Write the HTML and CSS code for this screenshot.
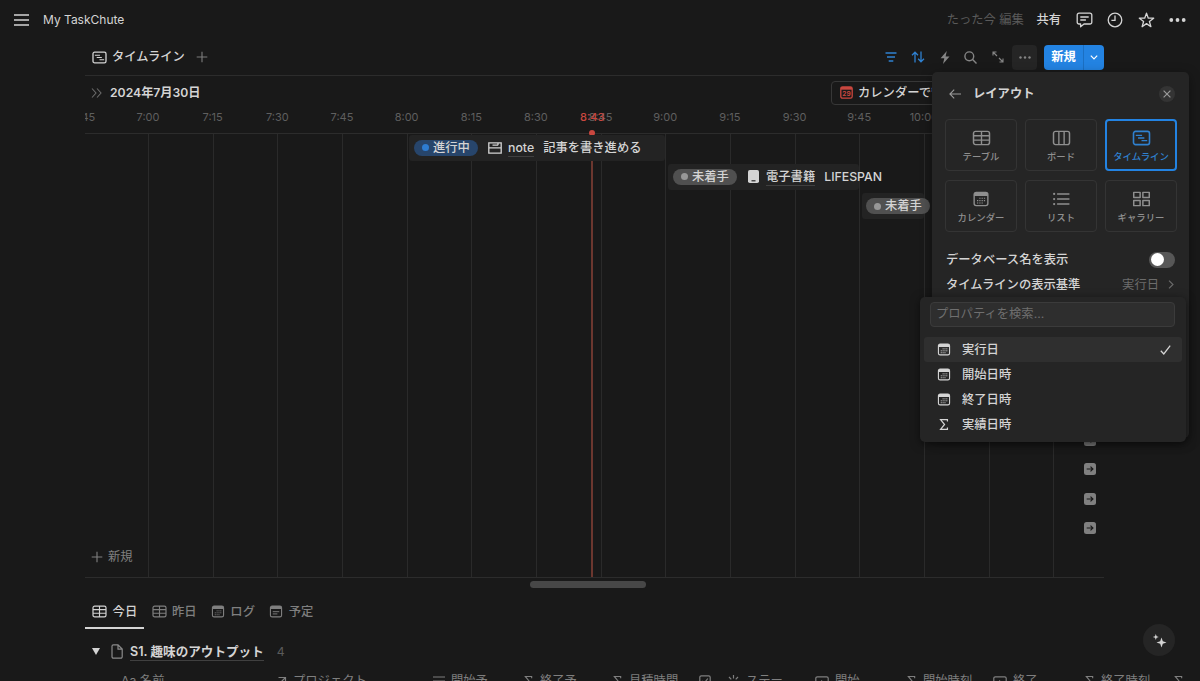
FILE: index.html
```html
<!DOCTYPE html>
<html lang="ja">
<head>
  <meta charset="UTF-8">
  <title>My TaskChute</title>
  <link rel="stylesheet" href="styles.css">
</head>
<body>

<!-- icons -->
<svg class="sprite" xmlns="http://www.w3.org/2000/svg">
  <symbol id="i-timeline" viewBox="0 0 16 14"><rect x="1" y="1.2" width="14" height="11.6" rx="1.8" fill="none" stroke="currentColor" stroke-width="1.4"/><path d="M3 4.600h5.500M5 7h5.500M8 9.400h5" fill="none" stroke="currentColor" stroke-width="1.1"/></symbol>
  <symbol id="i-table" viewBox="0 0 16 14"><rect x="1" y="1.2" width="14" height="11.6" rx="1.8" fill="none" stroke="currentColor" stroke-width="1.3"/><path d="M1 5h14M1 8.9h14M8 1.2v11.6" stroke="currentColor" stroke-width="1.2"/></symbol>
  <symbol id="i-board" viewBox="0 0 16 14"><rect x="1" y="1.2" width="14" height="11.6" rx="1.8" fill="none" stroke="currentColor" stroke-width="1.3"/><path d="M5.7 1.2v11.6M10.3 1.2v11.6" stroke="currentColor" stroke-width="1.2"/></symbol>
  <symbol id="i-cal" viewBox="0 0 14 14"><rect x="1" y="1.2" width="12" height="11.6" rx="1.8" fill="none" stroke="currentColor" stroke-width="1.2"/><path d="M1 4.4V3a1.9 1.9 0 0 1 1.9-1.9h8.200A1.900 1.900 0 0 1 13 3v1.400z" fill="currentColor"/><path d="M5.500 6.300h5.500M3.500 8.400h7.500M3.500 10.500h5.200" stroke="currentColor" stroke-width="1" stroke-dasharray="1.100 .9" fill="none"/></symbol>
  <symbol id="i-cal-list" viewBox="0 0 14 14"><rect x="1" y="1.2" width="12" height="11.6" rx="1.8" fill="none" stroke="currentColor" stroke-width="1.2"/><path d="M1 4.400V3a1.900 1.900 0 0 1 1.900-1.900h8.200A1.900 1.900 0 0 1 13 3v1.400z" fill="currentColor"/><path d="M3.500 7.200h7M3.500 9.600h5" stroke="currentColor" stroke-width="1"/></symbol>
  <symbol id="i-list" viewBox="0 0 16 14"><path d="M5 2.500h10M5 7h10M5 11.500h10" stroke="currentColor" stroke-width="1.400" stroke-linecap="round"/><circle cx="1.900" cy="2.500" r="1" fill="currentColor"/><circle cx="1.900" cy="7" r="1" fill="currentColor"/><circle cx="1.900" cy="11.500" r="1" fill="currentColor"/></symbol>
  <symbol id="i-gallery" viewBox="0 0 16 14"><path d="M1.200 1.200h5.600v4.400H1.200zM9.200 1.200h5.600v4.400H9.200zM1.200 8.400h5.600v4.400H1.200zM9.200 8.400h5.600v4.400H9.200z" fill="none" stroke="currentColor" stroke-width="1.300" stroke-linejoin="round"/></symbol>
  <symbol id="i-plus" viewBox="0 0 12 12"><path d="M6 .7v10.600M.7 6h10.600" stroke="currentColor" stroke-width="1.100"/></symbol>
  <symbol id="i-sigma" viewBox="0 0 12 14"><path d="M9.700 3.700V1.700H2.300L6.600 7 2.300 12.300h7.400v-2" fill="none" stroke="currentColor" stroke-width="1.300"/></symbol>
  <symbol id="i-jump" viewBox="0 0 12 12"><rect width="12" height="12" rx="2.500" fill="#808080"/><path d="M2.700 6h6M6.500 3.600L8.900 6 6.500 8.400" fill="none" stroke="#191919" stroke-width="1.200"/></symbol>
</svg>

<header class="topbar">
  <svg class="menu-icon" width="15" height="12" viewBox="0 0 15 12"><path d="M0 1h15M0 6h15M0 11h15" stroke="currentColor" stroke-width="1.4"/></svg>
  <span class="page-title">My TaskChute</span>
  <div class="topbar-right">
    <span class="edited">たった今 編集</span>
    <span class="share">共有</span>
    <svg width="17" height="16" viewBox="0 0 17 16" fill="none" stroke="currentColor" stroke-width="1.3" stroke-linejoin="round"><path d="M3 1.200h11a1.800 1.800 0 0 1 1.800 1.800v7.200a1.800 1.800 0 0 1-1.800 1.800H8l-3.400 2.800V12H3a1.800 1.800 0 0 1-1.800-1.800V3A1.800 1.800 0 0 1 3 1.200z"/><path d="M4.300 5h8.400M4.300 8h5.600"/></svg>
    <svg width="16" height="16" viewBox="0 0 16 16" fill="none" stroke="currentColor" stroke-width="1.3"><circle cx="8" cy="8" r="6.800"/><path d="M8 3.500V8.300H4.400"/></svg>
    <svg width="17" height="16" viewBox="0 0 17 16" fill="none" stroke="currentColor" stroke-width="1.3" stroke-linejoin="round"><path d="M8.500 1.200l1.800 5h5.400l-4.300 3.300 1.500 5.200-4.400-3.100-4.400 3.100 1.500-5.200L1.300 6.200h5.400z"/></svg>
    <svg width="17" height="4" viewBox="0 0 17 4" fill="currentColor"><circle cx="2.300" cy="2" r="1.900"/><circle cx="8.500" cy="2" r="1.900"/><circle cx="14.700" cy="2" r="1.900"/></svg>
  </div>
</header>

<main class="content">
  <div class="view-bar">
    <svg width="15" height="13"><use href="#i-timeline"/></svg>
    <span class="view-name">タイムライン</span>
    <svg class="muted" width="12" height="12"><use href="#i-plus"/></svg>
    <div class="tools">
      <svg class="blue" width="12" height="10" viewBox="0 0 12 10"><path d="M.5 1h11M2 5h8M3.700 9h4.600" stroke="currentColor" stroke-width="1.3"/></svg>
      <svg class="blue" width="14" height="12" viewBox="0 0 14 12" fill="none" stroke="currentColor" stroke-width="1.3"><path d="M4 11.500V1.200M1 4.200l3-3 3 3M10 .5v10.300M7.200 7.800l2.800 3 3-3"/></svg>
      <svg width="10" height="13" viewBox="0 0 10 13" fill="currentColor"><path d="M6.800 0L.6 7.200h3.700L3 13l6.500-7.500H5.600z"/></svg>
      <svg width="13" height="13" viewBox="0 0 13 13" fill="none" stroke="currentColor" stroke-width="1.4"><circle cx="5.300" cy="5.300" r="4.400"/><path d="M8.600 8.600l3.900 3.900"/></svg>
      <svg width="12" height="12" viewBox="0 0 12 12" fill="none" stroke="currentColor" stroke-width="1.1"><path d="M1 4.500V1h3.500M1 1l4 4M11 7.500V11H7.500M11 11L7 7"/></svg>
      <span class="more"><svg width="12" height="3" viewBox="0 0 12 3" fill="currentColor"><circle cx="1.500" cy="1.500" r="1.200"/><circle cx="6" cy="1.500" r="1.200"/><circle cx="10.500" cy="1.500" r="1.200"/></svg></span>
    </div>
    <div class="new-btn">
      <span>新規</span>
      <i><svg width="8" height="5" viewBox="0 0 8 5"><path d="M.8.700L4 3.900 7.200.7" fill="none" stroke="#fff" stroke-width="1.200"/></svg></i>
    </div>
  </div>

  <section class="timeline">
    <div class="date-row">
      <svg width="11" height="10" viewBox="0 0 11 10"><path d="M1 .500L5 5 1 9.500M6 .500L10 5 6 9.500" fill="none" stroke="currentColor" stroke-width="1.100"/></svg>
      <b>2024年7月30日</b>
      <div class="cal-btn">
        <svg width="13" height="13" viewBox="0 0 13 13"><rect x=".8" y=".8" width="11.400" height="11.400" rx="1.800" fill="none" stroke="#c9473f" stroke-width="1.300"/><path d="M1 1h11v2.700H1z" fill="#c9473f"/><text x="6.500" y="10.300" text-anchor="middle" class="cal-num">29</text></svg>
        カレンダーで管理
      </div>
    </div>
    <div class="ticks">
      <div class="tick-list">
        <span>6:45</span><span>7:00</span><span>7:15</span><span>7:30</span><span>7:45</span><span>8:00</span><span>8:15</span><span>8:30</span><span>8:45</span><span>9:00</span><span>9:15</span><span>9:30</span><span>9:45</span><span>10:00</span><span>10:15</span><span>10:30</span>
      </div>
      <span class="now-label">8:43</span>
    </div>

    <div class="chart">
      <div class="grid-lines">
        <i></i><i></i><i></i><i></i><i></i><i></i><i></i><i></i><i></i><i></i><i></i><i></i><i></i><i></i><i></i>
      </div>
      <div class="now-line"></div>
      <div class="rows">
        <div class="row">
          <div class="bar bar-1">
            <span class="status doing">進行中</span>
            <svg width="14" height="12" viewBox="0 0 14 12" fill="none" stroke="currentColor" stroke-width="1.300"><path d="M.8.8h12.400v10.400H.8zM.8 5.800h12.400M4.500 3.200h5.500M10 .8v2.400"/></svg>
            <span class="link">note</span>
            <span class="task">記事を書き進める</span>
          </div>
        </div>
        <div class="row">
          <div class="bar bar-2">
            <span class="status">未着手</span>
            <svg class="book" width="11" height="13" viewBox="0 0 11 13"><rect width="11" height="13" rx="1.800" fill="currentColor"/><path d="M3.500 10.800h4" stroke="#252525" stroke-width="1.200"/></svg>
            <span class="link">電子書籍</span>
            <span class="task">LIFESPAN</span>
          </div>
        </div>
        <div class="row">
          <div class="bar bar-3"><span class="status">未着手</span></div>
        </div>
        <div class="row"></div>
        <div class="row"></div>
        <div class="row"></div>
        <div class="row"></div>
        <div class="row"></div>
        <div class="row"></div>
        <div class="row"></div>
        <div class="row jump"><svg width="12" height="12"><use href="#i-jump"/></svg></div>
        <div class="row jump"><svg width="12" height="12"><use href="#i-jump"/></svg></div>
        <div class="row jump"><svg width="12" height="12"><use href="#i-jump"/></svg></div>
        <div class="row jump"><svg width="12" height="12"><use href="#i-jump"/></svg></div>
        <div class="row add"><svg width="12" height="12"><use href="#i-plus"/></svg>新規</div>
      </div>
    </div>
    <div class="scrollbar"></div>
  </section>

  <nav class="tabs">
    <span class="tab active"><svg width="15" height="13"><use href="#i-table"/></svg>今日</span>
    <span class="tab"><svg width="15" height="13"><use href="#i-table"/></svg>昨日</span>
    <span class="tab"><svg width="14" height="13"><use href="#i-cal"/></svg>ログ</span>
    <span class="tab"><svg width="14" height="13"><use href="#i-cal-list"/></svg>予定</span>
  </nav>

  <div class="group">
    <span class="caret"></span>
    <svg width="12" height="15" viewBox="0 0 12 15" fill="none" stroke="currentColor" stroke-width="1.200"><path d="M1 2.200A1.400 1.400 0 0 1 2.400.8H7l4.200 4.300v7.700a1.400 1.400 0 0 1-1.400 1.400H2.400A1.400 1.400 0 0 1 1 12.800zM7 .8v4.300h4.200"/></svg>
    <b>S1. 趣味のアウトプット</b>
    <span class="count">4</span>
  </div>
</main>

<div class="columns">
  <span>Aa 名前</span>
  <span><svg width="10" height="10" viewBox="0 0 10 10"><path d="M1.500 1.500h7v7M8.500 1.500l-7 7" fill="none" stroke="currentColor" stroke-width="1.200"/></svg>プロジェクト</span>
  <span><svg width="12" height="10" viewBox="0 0 12 10"><path d="M0 1h12M0 5h12M0 9h8" stroke="currentColor" stroke-width="1.200"/></svg>開始予</span>
  <span><svg width="11" height="12"><use href="#i-sigma"/></svg>終了予</span>
  <span><svg width="11" height="12"><use href="#i-sigma"/></svg>見積時間</span>
  <span><svg width="12" height="12" viewBox="0 0 12 12"><rect x=".8" y=".8" width="10.400" height="10.400" rx="1.500" fill="none" stroke="currentColor" stroke-width="1.200"/><path d="M3.300 6l2 2 3.500-4.500" fill="none" stroke="currentColor" stroke-width="1.200"/></svg></span>
  <span><svg width="13" height="13" viewBox="0 0 13 13"><path d="M6.500 0v3.500M6.500 9.500V13M0 6.500h3.500M9.500 6.500H13M2 2l2.300 2.300M8.700 4.300L11 2M2 11l2.300-2.300M8.700 8.700L11 11" stroke="currentColor" stroke-width="1.200"/></svg>ステー</span>
  <span><svg width="14" height="11" viewBox="0 0 14 11"><rect x=".8" y=".8" width="12.400" height="9.400" rx="1.500" fill="none" stroke="currentColor" stroke-width="1.200"/><path d="M6 4l2.500 1.500L6 7z" fill="currentColor"/></svg>開始</span>
  <span><svg width="11" height="12"><use href="#i-sigma"/></svg>開始時刻</span>
  <span><svg width="14" height="11" viewBox="0 0 14 11"><rect x=".8" y=".8" width="12.400" height="9.400" rx="1.500" fill="none" stroke="currentColor" stroke-width="1.200"/><path d="M6 4l2.500 1.500L6 7z" fill="currentColor"/></svg>終了</span>
  <span><svg width="11" height="12"><use href="#i-sigma"/></svg>終了時刻</span>
  <span><svg width="11" height="12"><use href="#i-sigma"/></svg></span>
</div>

<!-- layout panel -->
<aside class="panel">
  <div class="panel-head">
    <svg width="12" height="10" viewBox="0 0 12 10"><path d="M12 5H1M5.200.700L.9 5l4.300 4.300" fill="none" stroke="currentColor" stroke-width="1.100"/></svg>
    <b>レイアウト</b>
    <span class="close"><svg width="8" height="8" viewBox="0 0 8 8"><path d="M.600.600l6.800 6.800M7.400.6L.6 7.400" stroke="currentColor" stroke-width="1.200"/></svg></span>
  </div>
  <div class="layouts">
    <div class="layout"><svg width="19" height="16"><use href="#i-table"/></svg>テーブル</div>
    <div class="layout"><svg width="19" height="16"><use href="#i-board"/></svg>ボード</div>
    <div class="layout selected"><svg width="19" height="16"><use href="#i-timeline"/></svg>タイムライン</div>
    <div class="layout"><svg width="18" height="16"><use href="#i-cal"/></svg>カレンダー</div>
    <div class="layout"><svg width="18" height="16"><use href="#i-list"/></svg>リスト</div>
    <div class="layout"><svg width="19" height="16"><use href="#i-gallery"/></svg>ギャラリー</div>
  </div>
  <div class="setting">データベース名を表示 <span class="toggle"></span></div>
  <div class="setting">タイムラインの表示基準
    <span class="value">実行日<svg width="6" height="9" viewBox="0 0 6 9"><path d="M1 .600l4 3.900-4 3.900" fill="none" stroke="currentColor" stroke-width="1.100"/></svg></span>
  </div>
</aside>

<!-- property picker -->
<div class="picker">
  <div class="search">プロパティを検索...</div>
  <div class="option current"><svg width="14" height="13"><use href="#i-cal"/></svg>実行日
    <svg class="check" width="11" height="10" viewBox="0 0 11 10"><path d="M.8 5.700l3 3.300L10.200.700" fill="none" stroke="currentColor" stroke-width="1.300"/></svg>
  </div>
  <div class="option"><svg width="14" height="13"><use href="#i-cal"/></svg>開始日時</div>
  <div class="option"><svg width="14" height="13"><use href="#i-cal"/></svg>終了日時</div>
  <div class="option"><svg width="14" height="13"><use href="#i-sigma"/></svg>実績日時</div>
</div>

<div class="ai-btn">
  <svg width="15" height="15" viewBox="0 0 15 15" fill="currentColor"><path d="M9.500 4.500l1.300 3.700 3.700 1.300-3.700 1.300-1.300 3.700-1.300-3.700-3.700-1.300 3.700-1.300zM3.800 1l.8 2.200 2.200.8-2.200.8-.8 2.200L3 4.800.8 4 3 3.200z"/></svg>
</div>

</body>
</html>
```
FILE: styles.css
```css
* {
  box-sizing: border-box;
}
body {
  margin: 0;
  height: 681px;
  overflow: hidden;
  position: relative;
  background-color: #191919;
  color: #d4d4d4;
  font-family: Inter, "Noto Sans CJK JP", sans-serif;
  font-size: 12.3px;
  font-weight: 500;
  line-height: 16px;
  white-space: nowrap;
}
svg {
  display: block;
  flex: none;
}
b {
  font-weight: 600;
}
.sprite {
  position: absolute;
  width: 0;
  height: 0;
}

/* top bar */
.topbar {
  display: flex;
  align-items: center;
  height: 39px;
  padding: 0 14px;
}
.page-title {
  margin-left: 14px;
  font-weight: 400;
  font-size: 12px;
}
.topbar-right {
  display: flex;
  align-items: center;
  gap: 14.5px;
  margin-left: auto;
}
.edited {
  color: #5a5a5a;
  font-weight: 400;
  margin-right: -2px;
}

/* view bar */
.content {
  width: 1019px;
  margin-left: 85px;
}
.view-bar {
  display: flex;
  align-items: center;
  height: 37px;
  padding-left: 7px;
  border-bottom: 1px solid #2c2c2c;
}
.view-name {
  margin: 0 11px 0 5px;
}
.muted {
  color: #7d7d7d;
}
.tools {
  display: flex;
  align-items: center;
  gap: 14.4px;
  margin-left: auto;
  color: #858585;
}
.blue {
  color: #2f81d0;
}
.more {
  display: flex;
  align-items: center;
  justify-content: center;
  width: 25px;
  height: 25px;
  margin-left: -6px;
  border-radius: 4px;
  background-color: #252525;
}
.new-btn {
  display: flex;
  align-items: center;
  width: 60px;
  height: 25px;
  margin-left: 7px;
  border-radius: 4px;
  background-color: #2383e2;
  color: #fff;
  font-weight: 600;
}
.new-btn span {
  width: 39px;
  text-align: center;
}
.new-btn i {
  display: flex;
  align-items: center;
  justify-content: center;
  flex: 1;
  height: 100%;
  border-left: 1px solid #1b6fc2;
}

/* timeline */
.date-row {
  display: flex;
  align-items: center;
  height: 33px;
  padding-left: 6px;
  color: #6b6b6b;
}
.date-row b {
  margin-left: 8px;
  color: #d4d4d4;
  font-size: 12.2px;
}
.cal-btn {
  display: flex;
  align-items: center;
  gap: 5px;
  height: 24px;
  margin-left: auto;
  width: 273px;
  padding-left: 8px;
  border: 1px solid #373737;
  border-radius: 4px;
  color: #d4d4d4;
}
.cal-num {
  fill: #c9473f;
  font-size: 6.5px;
  font-weight: 700;
}
.ticks {
  position: relative;
  height: 24px;
  overflow: hidden;
  color: #5f5f5f;
  font-size: 11px;
  font-weight: 400;
}
.tick-list {
  display: flex;
  margin-left: -34px;
}
.tick-list span {
  flex: none;
  width: 64.66px;
  text-align: center;
}
.now-label {
  position: absolute;
  left: 495px;
  top: 0;
  color: #c9473f;
  font-weight: 500;
}
.chart {
  position: relative;
  height: 445px;
  border-top: 1px solid #2c2c2c;
  border-bottom: 1px solid #2c2c2c;
}
.grid-lines {
  display: flex;
  height: 100%;
}
.grid-lines i {
  flex: none;
  width: 64.66px;
  border-right: 1px solid #2a2a2a;
}
.grid-lines i:first-child {
  width: 64px;
}
.now-line {
  position: absolute;
  left: 506px;
  top: 0;
  bottom: 0;
  width: 2px;
  background-color: #6c372f;
}
.now-line::before {
  content: "";
  position: absolute;
  left: -2px;
  top: -4px;
  width: 6px;
  height: 6px;
  border-radius: 50%;
  background-color: #c9473f;
}
.rows {
  position: absolute;
  inset: 0;
}
.row {
  display: flex;
  align-items: center;
  height: 29.25px;
  padding-bottom: 2px;
}
.bar {
  display: flex;
  align-items: center;
  height: 26px;
  padding-left: 5px;
  border-radius: 3px;
  background-color: #232323;
}
.bar-1 {
  width: 256px;
  margin-left: 324px;
}
.bar-2 {
  width: 191px;
  margin-left: 583px;
}
.bar-3 {
  width: 62px;
  margin-left: 777px;
  padding-left: 4px;
}
.status {
  display: flex;
  flex: none;
  align-items: center;
  gap: 4px;
  width: 64px;
  height: 16px;
  margin-right: 10px;
  padding-left: 8px;
  border-radius: 8px;
  background-color: #505050;
}
.status::before {
  content: "";
  width: 7px;
  height: 7px;
  border-radius: 50%;
  background-color: #979797;
}
.doing {
  background-color: #27456b;
}
.doing::before {
  background-color: #2e7cd1;
}
.book {
  margin: 0 1px;
}
.link {
  margin: 0 9px -1px 6px;
  border-bottom: 1px solid #404040;
}
.jump {
  justify-content: flex-end;
  padding-right: 8px;
}
.add {
  gap: 5px;
  padding-left: 6px;
  color: #808080;
  font-weight: 400;
}
.scrollbar {
  width: 116px;
  height: 7px;
  margin: 3px 0 0 445px;
  border-radius: 4px;
  background-color: #474747;
}

/* tabs */
.tabs {
  display: flex;
  height: 35px;
  margin-top: 6px;
}
.tab {
  display: flex;
  align-items: center;
  gap: 5px;
  padding: 0 7.2px;
  color: #7f7f7f;
}
.tab svg {
  margin-right: .4px;
}
.tab.active {
  color: #d4d4d4;
  border-bottom: 2px solid #d4d4d4;
  padding-top: 2px;
}
.group {
  display: flex;
  align-items: center;
  height: 45px;
  padding-left: 7px;
  color: #8a8a8a;
}
.caret {
  border: 4px solid transparent;
  border-top: 7px solid #d4d4d4;
  border-bottom: 0;
  margin-right: 11px;
}
.group b {
  margin: 0 13px -1px 7px;
  color: #d4d4d4;
  font-size: 12.6px;
  border-bottom: 1px solid #404040;
}
.count {
  color: #5a5a5a;
  font-weight: 400;
}
.columns {
  display: grid;
  grid-template-columns: 156px 156px 90px 89px 87px 28px 88px 91px 87px 91px 89px 27px;
  margin: -1px 0 0 121px;
  color: #7f7f7f;
  font-weight: 400;
}
.columns span {
  display: flex;
  align-items: center;
  gap: 6px;
}

/* layout panel */
.panel {
  position: absolute;
  left: 932px;
  top: 72px;
  width: 257px;
  height: 366px;
  padding: 0 12px 0 13px;
  border-radius: 5px;
  background-color: #252525;
  box-shadow: 0 3px 12px rgba(0,0,0,0.4);
}
.panel-head {
  display: flex;
  align-items: center;
  height: 44px;
  padding: 0 2px 0 4px;
  color: #9b9b9b;
}
.panel-head b {
  margin-left: 12px;
  color: #d4d4d4;
}
.close {
  display: flex;
  align-items: center;
  justify-content: center;
  width: 16px;
  height: 16px;
  margin-left: auto;
  border-radius: 50%;
  background-color: #343434;
}
.layouts {
  display: grid;
  grid-template-columns: repeat(3, 72px);
  gap: 9px 8px;
  margin: 3px 0 15px;
}
.layout {
  display: flex;
  flex-direction: column;
  align-items: center;
  justify-content: center;
  gap: 3px;
  height: 52px;
  padding-top: 4px;
  border: 1px solid #343434;
  border-radius: 4px;
  color: #8f8f8f;
  font-size: 9.4px;
}
.layout.selected {
  border: 2px solid #2383e2;
  color: #2f81d0;
}
.setting {
  display: flex;
  align-items: center;
  justify-content: space-between;
  height: 25px;
  padding: 0 2px 0 1px;
}
.toggle {
  width: 26px;
  height: 16px;
  border-radius: 8px;
  padding: 1.5px;
  background-color: #575757;
}
.toggle::before {
  content: "";
  display: block;
  width: 13px;
  height: 13px;
  border-radius: 50%;
  background-color: #fff;
}
.value {
  display: flex;
  align-items: center;
  gap: 9px;
  padding-right: 1px;
  color: #6c6c6c;
  font-weight: 400;
}

/* property picker */
.picker {
  position: absolute;
  left: 920px;
  top: 297px;
  width: 266px;
  height: 145px;
  padding: 5px 4px;
  border-radius: 5px;
  background-color: #252525;
  box-shadow: 0 2px 10px rgba(0,0,0,0.5);
}
.search {
  height: 25px;
  margin: 0 7px 10px 6px;
  padding: 3px 5px;
  border: 1px solid #3b3b3b;
  border-radius: 4px;
  background-color: #2e2e2e;
  color: #6f6f6f;
  font-weight: 400;
}
.option {
  display: flex;
  align-items: center;
  gap: 11px;
  height: 25px;
  padding: 0 11px 0 13px;
}
.current {
  border-radius: 3px;
  background-color: #2f2f2f;
}
.check {
  margin-left: auto;
}

.ai-btn {
  position: absolute;
  left: 1143px;
  top: 624px;
  display: flex;
  align-items: center;
  justify-content: center;
  width: 32px;
  height: 32px;
  border-radius: 50%;
  background-color: #252525;
}
```
